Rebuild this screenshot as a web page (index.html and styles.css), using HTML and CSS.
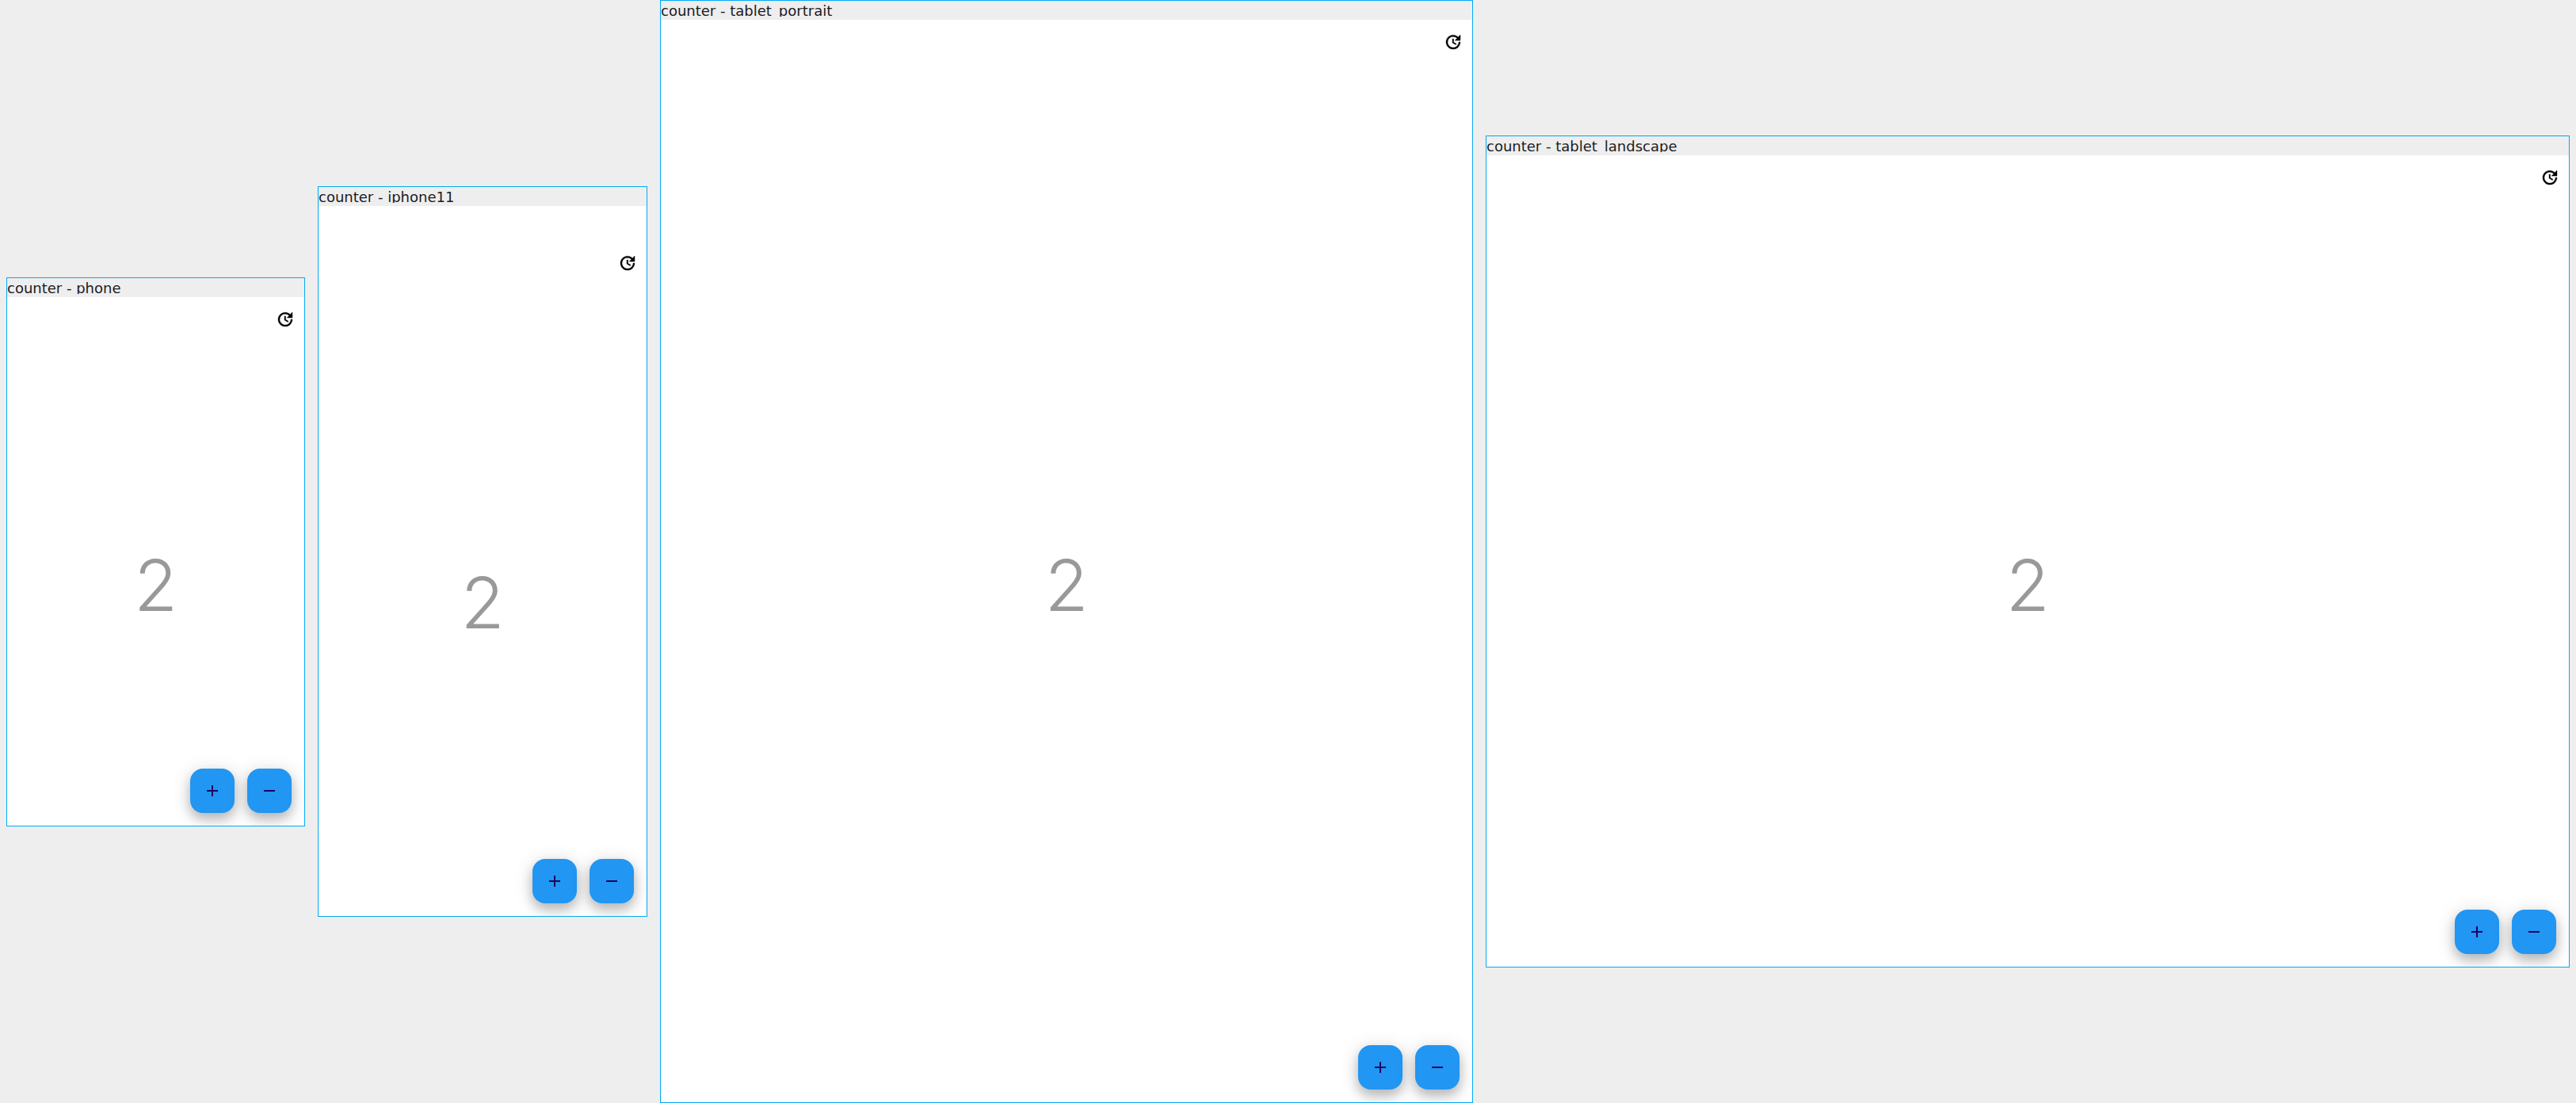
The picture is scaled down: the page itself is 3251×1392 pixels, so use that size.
FILE: index.html
```html
<!DOCTYPE html>
<html lang="en">
<head>
<meta charset="utf-8">
<meta name="viewport" content="width=device-width, initial-scale=1">
<title>counter</title>
<link rel="stylesheet" href="styles.css">
</head>
<body>
<svg class="sprite" aria-hidden="true">
  <symbol id="update" viewBox="0 0 24 24"><path stroke="currentColor" stroke-width=".4" d="M21 10.12h-6.78l2.74-2.82c-2.73-2.7-7.15-2.8-9.88-.1-2.73 2.71-2.73 7.08 0 9.79s7.15 2.71 9.88 0C18.32 15.65 19 14.08 19 12.1h2c0 1.98-.88 4.55-2.64 6.29-3.51 3.48-9.21 3.48-12.72 0-3.5-3.47-3.53-9.11-.02-12.58s9.14-3.47 12.65 0L21 3v7.12zM12.5 8v4.25l3.5 2.08-.72 1.21L11 13V8h1.5z"/></symbol>
  <symbol id="add" viewBox="0 0 24 24"><path d="M19 13h-6v6h-2v-6H5v-2h6V5h2v6h6v2z"/></symbol>
  <symbol id="remove" viewBox="0 0 24 24"><path d="M19 13H5v-2h14v2z"/></symbol>
</svg>
<main class="board">
  <section class="device phone">
    <header class="caption"><h2 class="name">counter - phone</h2></header>
    <div class="screen">
      <div class="appbar"><button class="reset" type="button" aria-label="Reset"><svg class="icon"><use href="#update"/></svg></button></div>
      <div class="content">
        <output class="count">2</output>
        <div class="actions">
          <button class="fab" type="button" aria-label="Increment"><svg class="icon"><use href="#add"/></svg></button>
          <button class="fab" type="button" aria-label="Decrement"><svg class="icon"><use href="#remove"/></svg></button>
        </div>
      </div>
    </div>
  </section>
  <section class="device iphone">
    <header class="caption"><h2 class="name">counter - iphone11</h2></header>
    <div class="screen">
      <div class="appbar"><button class="reset" type="button" aria-label="Reset"><svg class="icon"><use href="#update"/></svg></button></div>
      <div class="content">
        <output class="count">2</output>
        <div class="actions">
          <button class="fab" type="button" aria-label="Increment"><svg class="icon"><use href="#add"/></svg></button>
          <button class="fab" type="button" aria-label="Decrement"><svg class="icon"><use href="#remove"/></svg></button>
        </div>
      </div>
    </div>
  </section>
  <section class="device portrait">
    <header class="caption"><h2 class="name">counter - tablet_portrait</h2></header>
    <div class="screen">
      <div class="appbar"><button class="reset" type="button" aria-label="Reset"><svg class="icon"><use href="#update"/></svg></button></div>
      <div class="content">
        <output class="count">2</output>
        <div class="actions">
          <button class="fab" type="button" aria-label="Increment"><svg class="icon"><use href="#add"/></svg></button>
          <button class="fab" type="button" aria-label="Decrement"><svg class="icon"><use href="#remove"/></svg></button>
        </div>
      </div>
    </div>
  </section>
  <section class="device landscape">
    <header class="caption"><h2 class="name">counter - tablet_landscape</h2></header>
    <div class="screen">
      <div class="appbar"><button class="reset" type="button" aria-label="Reset"><svg class="icon"><use href="#update"/></svg></button></div>
      <div class="content">
        <output class="count">2</output>
        <div class="actions">
          <button class="fab" type="button" aria-label="Increment"><svg class="icon"><use href="#add"/></svg></button>
          <button class="fab" type="button" aria-label="Decrement"><svg class="icon"><use href="#remove"/></svg></button>
        </div>
      </div>
    </div>
  </section>
</main>
</body>
</html>
```

FILE: styles.css
```css
* { box-sizing: border-box; }

body {
  margin: 0;
  background: #eee;
  color: #1c1b1f;
  font-family: "DejaVu Sans", sans-serif;
}

.sprite { display: none; }

.board {
  display: flex;
  align-items: center;
  gap: 16px;
  min-height: 100vh;
  padding: 0 8px;
}

/* Each device grows in proportion to its logical width. */
.device {
  min-width: 0;
  border: 1px solid #03a9f4;
}
.phone { flex: 375 1 0; }
.iphone { flex: 414 1 0; }
.portrait { flex: 1024 1 0; }
.landscape { flex: 1366 1 0; }

.caption { height: 24px; }

.name {
  height: 20px;
  margin: 0;
  overflow: hidden;
  font-size: 18px;
  font-weight: 400;
  line-height: 26px;
  white-space: nowrap;
}

.screen {
  display: flex;
  flex-direction: column;
  overflow: hidden;
  background: #fff;
}
.phone .screen { aspect-ratio: 375 / 667; }
.iphone .screen { aspect-ratio: 414 / 896; padding-top: 44px; }
.portrait .screen { aspect-ratio: 1024 / 1366; }
.landscape .screen { aspect-ratio: 1366 / 1024; }

.appbar {
  display: flex;
  flex: none;
  align-items: center;
  justify-content: flex-end;
  height: 56px;
}

.icon {
  display: block;
  width: 24px;
  height: 24px;
  fill: currentColor;
}

button {
  display: grid;
  place-items: center;
  padding: 0;
  border: 0;
  cursor: pointer;
}

.reset {
  width: 48px;
  height: 48px;
  background: none;
  color: #000;
}

.content {
  display: grid;
  flex: 1;
}

/* The action buttons share the grid cell with the count. */
.count,
.actions { grid-area: 1 / 1; }

.count {
  place-self: center;
  padding-top: 6px;
  color: #999;
  font-family: Inter, sans-serif;
  font-size: 90px;
  font-weight: 300;
  line-height: 112px;
}

.actions {
  display: flex;
  gap: 16px;
  place-self: end;
  padding: 16px;
}

.fab {
  width: 56px;
  height: 56px;
  border-radius: 16px;
  background: #2196f3;
  color: #21005d;
  box-shadow:
    0 8px 14px rgba(0, 0, 0, .2),
    0 4px 24px rgba(0, 0, 0, .16);
}
```
